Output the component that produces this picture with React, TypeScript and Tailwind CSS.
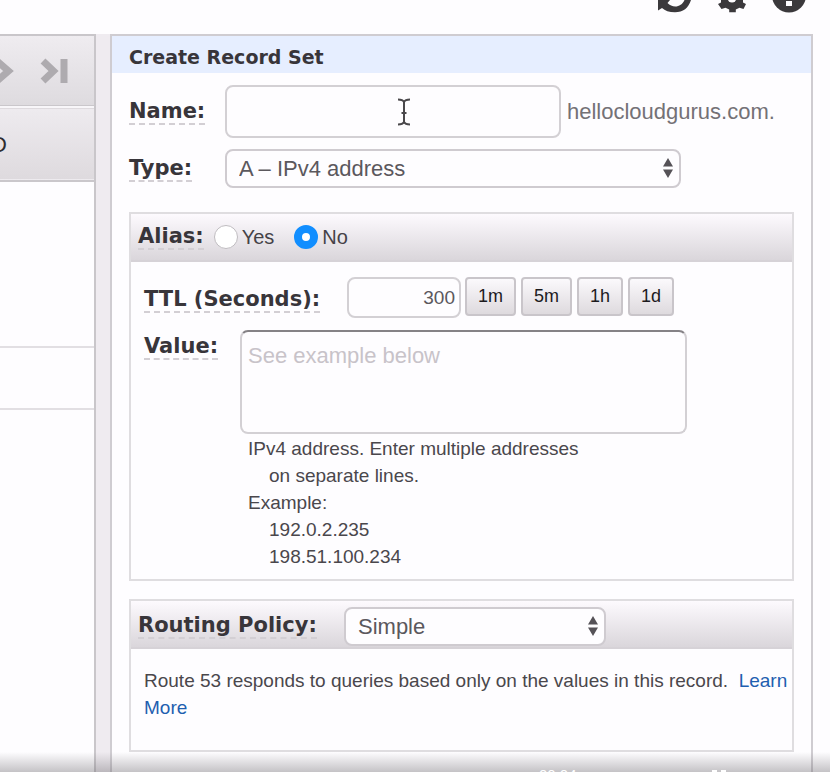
import React from "react";

const sans = "font-['Liberation_Sans',Arial,sans-serif]";
const bold = "font-['DejaVu_Sans',Verdana,sans-serif] font-bold text-[#38353a]";

function Caption({ htmlFor, children }: { htmlFor?: string; children: React.ReactNode }) {
  const cls = `${bold} inline-block whitespace-nowrap border-b-2 border-dashed border-[#d3cfd4] text-[21px] leading-6`;
  return htmlFor ? (
    <label htmlFor={htmlFor} className={cls}>{children}</label>
  ) : (
    <span className={cls}>{children}</span>
  );
}

function Picker({ id, value, className }: { id: string; value: string; className: string }) {
  return (
    <div className={`relative ${className}`}>
      <select
        id={id}
        defaultValue={value}
        className="block h-[39px] w-full appearance-none rounded-lg border-2 border-[#cfcbd0] bg-[#fefdff] pl-3 pr-8 text-[22px] text-[#5b585d] outline-none"
      >
        <option>{value}</option>
      </select>
      <svg className="pointer-events-none absolute right-2 top-[9px] h-5 w-[10px]" viewBox="0 0 10 20" fill="#555257">
        <path d="M5 0l5 8.500H0zM5 20L0 11.500h10z" />
      </svg>
    </div>
  );
}

function TopIcons() {
  return (
    <header className="flex h-[34px] shrink-0 items-start justify-end gap-[26px] pr-6">
      <button aria-label="Refresh">
        <svg className="block h-[13px] w-9" viewBox="0 0 36 13">
          <path d="M2 10.500V0h12l-2.500 3c5 5.500 14 4.500 17-3h6.500C32.500 8 27 12.300 19 12.300c-6 0-10-1.500-13-4.300z" fill="#3b393c" />
        </svg>
      </button>
      <button aria-label="Settings">
        <svg className="block h-[13px] w-7" viewBox="0 0 28 13">
          <path d="M3 0h22v2.500l3 1.500-2.500 5-4-1.200-3.700 1.700V12.200h-6.600V9.500L7.500 7.800l-4 1.200L0 4l3-1.500z" fill="#3b393c" />
          <circle cx="14" cy="-2" r="4.500" fill="#fefdff" />
        </svg>
      </button>
      <button aria-label="Help">
        <svg className="block h-[13px] w-[34px]" viewBox="0 0 34 13">
          <circle cx="17" cy="-4.500" r="17" fill="#3b393c" />
          <path d="M14 1h6v5h-6z" fill="#fefdff" />
        </svg>
      </button>
    </header>
  );
}

function RecordList() {
  return (
    <aside className="w-24 shrink-0 overflow-hidden border-r-2 border-t-2 border-[#c9c6ca] bg-[#fefdff]">
      <div className="flex h-[70px] items-center border-b border-[#cac7cb] bg-gradient-to-b from-[#efecf0] to-[#dedbdf]">
        <button aria-label="Next and last page">
          <svg className="block h-[26px] w-[70px]" viewBox="0 0 70 26" fill="none" stroke="#aeabaf" strokeWidth="7">
            <path d="M-3 3l11.500 10L-3 23" />
            <path d="M43 3l10.500 10-10.500 10" />
            <path d="M64 1v24" />
          </svg>
        </button>
      </div>
      <table className="w-full border-collapse text-[22px] text-[#2e2c2f]">
        <thead>
          <tr className="h-[74px] border-b-2 border-t-2 border-b-[#cac7cb] border-t-[#f8f6f9] bg-gradient-to-b from-[#eeebef] to-[#dedade]">
            <th className="p-0 text-left font-normal">
              <span className="-ml-[9px]">D</span>
            </th>
          </tr>
        </thead>
        <tbody>
          <tr className="h-[166px] border-b-2 border-[#e2dfe3]"><td /></tr>
          <tr className="h-[62px] border-b-2 border-[#e2dfe3]"><td /></tr>
        </tbody>
      </table>
    </aside>
  );
}

function PlayerShade() {
  return (
    <div className="pointer-events-none absolute inset-x-0 bottom-0 h-5 overflow-hidden bg-gradient-to-b from-transparent to-[#6e6b70]/40 pl-[539px] pt-[13px]">
      <div className="flex items-start gap-[134px] text-[15px] leading-5 text-white">
        <span>00:04</span>
        <svg className="mt-[5px] h-2 w-4" viewBox="0 0 16 8" fill="#ffffff">
          <path d="M1 0h5v3H1zM10 0h5v3h-5z" />
        </svg>
      </div>
    </div>
  );
}

const band = "flex h-12 items-center border-b-2 border-[#d6d2d7] bg-gradient-to-b from-[#fdfafe] to-[#dad6db] pl-[7px]";
const box = "mx-[17px] border-2 border-[#dfdde0]";
const radio =
  "size-6 appearance-none rounded-full border border-[#bfbcc0] bg-white checked:border-8 checked:border-[#118eff]";

export default function App() {
  return (
    <div className={`relative flex h-screen flex-col overflow-hidden bg-[#fefdff] ${sans}`}>
      <TopIcons />
      <div className="flex min-h-0 flex-1">
        <RecordList />
        <div className="w-[14px] shrink-0 bg-[#efebf0]" />
        <main className="mr-[17px] min-w-0 flex-1 border-2 border-b-0 border-[#cfccd1] bg-[#fefdff]">
          <h1 className={`${bold} bg-[#e6eeff] pb-0.5 pl-[17px] pt-2 text-[19px] leading-[27px]`}>Create Record Set</h1>

          <div className="mt-3 flex items-center pl-[17px]">
            <div className="flex w-24 shrink-0"><Caption htmlFor="name">Name:</Caption></div>
            <div className="relative w-[336px] shrink-0">
              <input
                id="name"
                className="block h-[53px] w-full rounded-lg border-2 border-[#d3d0d4] bg-[#fefdff] px-3 text-[22px] text-[#5b585d] outline-none"
              />
              <svg className="pointer-events-none absolute left-[173px] top-[13px] h-7 w-3" viewBox="0 0 12 28" fill="none" stroke="#4a484b" strokeWidth="2">
                <path d="M0 1.500c3 0 5 .5 6 2.500 1-2 3-2.500 6-2.500M0 26.500c3 0 5-.5 6-2.500 1 2 3 2.500 6 2.500M6 4v20M3.500 15h5" />
              </svg>
            </div>
            <span className="ml-1.5 text-[22px] leading-7 text-[#747176]">hellocloudgurus.com.</span>
          </div>

          <div className="mt-[11px] flex items-center pl-[17px]">
            <div className="flex w-24 shrink-0"><Caption htmlFor="type">Type:</Caption></div>
            <Picker id="type" value="A – IPv4 address" className="w-[456px]" />
          </div>

          <section className={`${box} mt-6 h-[369px]`}>
            <div className={band}>
              <Caption>Alias:</Caption>
              <div className="ml-2.5 flex items-center gap-5 text-[20px] text-[#454247]">
                <label className="flex items-center gap-1"><input type="radio" name="alias" className={radio} />Yes</label>
                <label className="flex items-center gap-1"><input type="radio" name="alias" defaultChecked className={radio} />No</label>
              </div>
            </div>

            <div className="mt-[15px] flex items-start pl-[13px]">
              <div className="flex w-[203px] shrink-0 pt-2.5"><Caption htmlFor="ttl">TTL (Seconds):</Caption></div>
              <input
                id="ttl"
                defaultValue="300"
                className="h-[41px] w-[114px] rounded-lg border-2 border-[#d3d0d4] bg-[#fefdff] pr-1 text-right text-[19px] text-[#5b585d] outline-none"
              />
              <div className="ml-1 flex gap-[5px] text-[18px] text-[#1d1b1e]">
                {["1m", "5m", "1h", "1d"].map((t) => (
                  <button
                    key={t}
                    className="h-[39px] rounded-[4px] border-2 border-[#c9c5ca] bg-gradient-to-b from-[#fbf9fc] to-[#dedade] px-[11px]"
                  >
                    {t}
                  </button>
                ))}
              </div>
            </div>

            <div className="mt-3 flex items-start pl-[13px]">
              <div className="flex w-24 shrink-0 pt-1"><Caption htmlFor="value">Value:</Caption></div>
              <textarea
                id="value"
                placeholder="See example below"
                className="block h-[104px] w-[447px] resize-none rounded-lg border-2 border-[#d3d0d4] border-t-[#858286] bg-[#fefdff] px-1.5 py-2.5 text-[22px] leading-7 outline-none placeholder:text-[#c8c3c9]"
              />
            </div>
            <div className="pl-[117px] pt-px text-[19px] leading-[27px] text-[#4a474c]">
              <p>IPv4 address. Enter multiple addresses</p>
              <p className="pl-[21px]">on separate lines.</p>
              <p>Example:</p>
              <p className="pl-[21px]">192.0.2.235</p>
              <p className="pl-[21px]">198.51.100.234</p>
            </div>
          </section>

          <section className={`${box} mt-[18px] h-[153px]`}>
            <div className={`${band} pt-1`}>
              <div className="flex w-[206px] shrink-0"><Caption htmlFor="policy">Routing Policy:</Caption></div>
              <Picker id="policy" value="Simple" className="w-[262px]" />
            </div>
            <p className="pl-[13px] pt-[18px] text-[19px] leading-[27px] text-[#4a474c]">
              Route 53 responds to queries based only on the values in this record.&nbsp;{" "}
              <a href="#learn" className="text-[#1f5fb0]">Learn More</a>
            </p>
          </section>
        </main>
      </div>
      <PlayerShade />
    </div>
  );
}
